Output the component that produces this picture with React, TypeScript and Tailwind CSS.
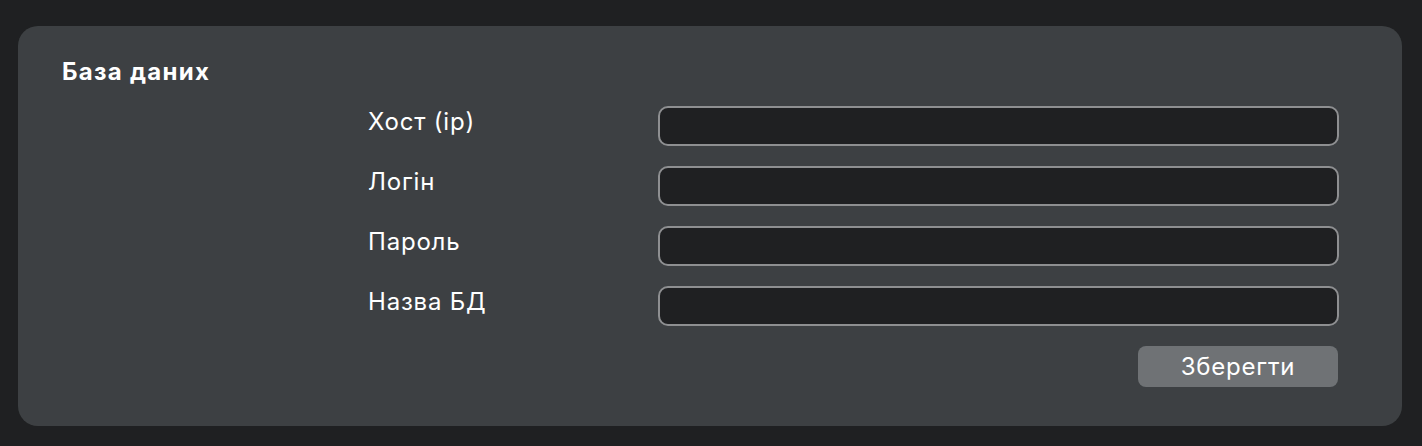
import React from "react";

const fields = ["Хост (ip)", "Логін", "Пароль", "Назва БД"];

export default function App() {
  return (
    <div
      className="w-[1422px] h-[446px] bg-[#1f2022] pt-[26px] pl-[18px] pr-[20px] pb-[20px]"
      style={{ fontFamily: "Inter, 'Noto Sans', sans-serif" }}
    >
      <div className="h-full rounded-[20px] bg-[#3d4043] pt-[30px] pl-[44px] pr-[63px] pb-[39px] text-white">
        <h2 className="text-[24px] leading-8 font-bold tracking-[1.3px]">База даних</h2>
        <div className="ml-[306px] mt-[18px] flex flex-col gap-[20px]">
          {fields.map((f) => (
            <div key={f} className="flex items-start">
              <label className="w-[290px] text-[24px] leading-8 tracking-[0.8px]">{f}</label>
              <input
                type="text"
                className="flex-1 h-[40px] rounded-[10px] bg-[#1f2022] border-2 border-[#8e8f91] outline-none px-3 text-white"
              />
            </div>
          ))}
          <div className="flex justify-end">
            <button className="w-[200px] h-[41px] mr-[1px] rounded-[8px] bg-[#6f7275] text-[24px] leading-none tracking-[0.8px] text-white">
              Зберегти
            </button>
          </div>
        </div>
      </div>
    </div>
  );
}
